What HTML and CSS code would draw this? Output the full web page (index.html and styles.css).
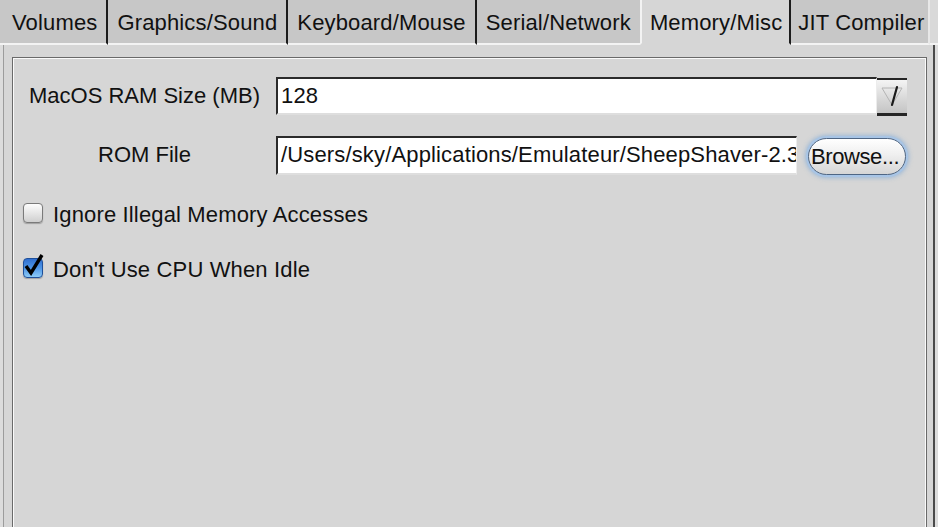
FILE: index.html
```html
<!DOCTYPE html>
<html>
<head>
<meta charset="utf-8">
<link rel="stylesheet" href="styles.css">
</head>
<body>
<div class="tabs">
  <div class="tab first">Volumes</div>
  <div class="tab">Graphics/Sound</div>
  <div class="tab">Keyboard/Mouse</div>
  <div class="tab before-active">Serial/Network</div>
  <div class="tab active">Memory/Misc</div>
  <div class="tab last">JIT Compiler</div>
  <div class="tab-fill"></div>
</div>
<div class="panel">
  <div class="group">
    <div class="form">
      <div class="lbl">MacOS RAM Size (MB)</div>
      <div class="combo">
        <div class="field">128</div>
        <div class="drop">
          <svg width="30" height="33" viewBox="0 0 30 33">
            <path d="M5 8 L25 8 L15 25 Z" fill="none" stroke="#b4b4b4" stroke-width="1"/>
            <path d="M20 7 L15 25" stroke="#1a1a1a" stroke-width="2.2" stroke-linecap="round"/>
          </svg>
        </div>
      </div>
      <div class="lbl">ROM File</div>
      <div class="filerow">
        <div class="field path">/Users/sky/Applications/Emulateur/SheepShaver-2.3</div>
        <button class="browse">Browse...</button>
      </div>
    </div>
    <div class="checks">
      <div class="check"><span class="box"></span><span class="ctext">Ignore Illegal Memory Accesses</span></div>
      <div class="check"><span class="box on"><svg width="24" height="26" viewBox="0 0 24 26"><path d="M4 14 L9 21 L20 3" fill="none" stroke="#000" stroke-width="3.4" stroke-linejoin="miter" stroke-linecap="butt"/></svg></span><span class="ctext">Don't Use CPU When Idle</span></div>
    </div>
  </div>
</div>
</body>
</html>
```

FILE: styles.css
```css
html, body {
  margin: 0;
  padding: 0;
}
body {
  width: 938px;
  height: 527px;
  overflow: hidden;
  background: #dcdcdc;
  font-family: "Liberation Sans", Arial, sans-serif;
  font-size: 22px;
  letter-spacing: 0.15px;
  color: #111;
}

.tabs {
  display: flex;
  height: 45px;
}
.tab {
  box-sizing: border-box;
  height: 45px;
  padding: 2px 9px 0 9px;
  display: flex;
  align-items: center;
  background: #c7c7c7;
  border-right: 2px solid #1c1c1c;
  border-bottom: 2px solid #f3f3f3;
  white-space: nowrap;
}
.tab.first {
  padding-left: 12px;
  padding-right: 9px;
}
.tab.before-active {
  border-right: none;
  padding-right: 9px;
}
.tab.active {
  background: #d6d6d6;
  border-left: 2px solid #f3f3f3;
  border-bottom-color: #d6d6d6;
  padding-left: 8px;
  padding-right: 7px;
}
.tab.last {
  padding-left: 7px;
  padding-right: 4px;
  border-right: 2px solid #e8e8e8;
}
.tab-fill {
  flex: 1;
  background: #d9d9d9;
  border-bottom: 2px solid #f3f3f3;
}

.panel {
  box-sizing: border-box;
  height: 482px;
  margin: 0 3px 0 3px;
  background: #d6d6d6;
  border-left: 1px solid #9c9c9c;
  border-right: 2px solid #4a4a4a;
  padding: 12px 6px 0 8px;
}

.group {
  box-sizing: border-box;
  height: 480px;
  border: 1px solid #6a6a6a;
  border-bottom: none;
  box-shadow: inset 1px 1px 0 #fafafa, inset -1px 0 0 #fafafa;
  padding: 19px 19px 0 9px;
}

.form {
  display: grid;
  grid-template-columns: 245px 1fr;
  column-gap: 9px;
  row-gap: 20px;
  align-items: center;
}
.lbl {
  text-align: center;
  white-space: nowrap;
  letter-spacing: 0;
}

.combo {
  display: flex;
  align-items: flex-start;
  height: 38px;
}
.field {
  box-sizing: border-box;
  background: #fff;
  border-top: 2px solid #2b2b2b;
  border-left: 2px solid #2b2b2b;
  border-bottom: 2px solid #dedede;
  border-right: 1px solid #ececec;
  padding: 0 4px 0 3px;
  display: flex;
  align-items: center;
  white-space: nowrap;
  overflow: hidden;
}
.combo .field {
  flex: 1;
  height: 38px;
}
.drop {
  box-sizing: border-box;
  width: 30px;
  height: 38px;
  margin-top: 1px;
  border-top: 2px solid #262626;
  border-bottom: 3px solid #262626;
  background: linear-gradient(#f4f4f4, #d9d9d9 55%, #c4c4c4);
}
.drop svg {
  display: block;
}

.filerow {
  display: flex;
  align-items: center;
  gap: 11px;
}
.field.path {
  width: 521px;
  height: 39px;
}
.browse {
  box-sizing: border-box;
  width: 98px;
  height: 37px;
  margin-top: 3px;
  padding: 0 0 0 2px;
  border: 1px solid #4f6684;
  border-radius: 19px;
  background: linear-gradient(#ffffff, #efefef 45%, #d6d6d6);
  box-shadow: 0 0 0 2px #a8c5e6, 0 0 4px 3px rgba(110, 160, 215, 0.55);
  font-family: "Liberation Sans", Arial, sans-serif;
  font-size: 22px;
  letter-spacing: -0.4px;
  color: #111;
  white-space: nowrap;
  text-align: left;
  overflow: hidden;
}

.checks {
  margin-top: 28px;
  padding-left: 1px;
  display: flex;
  flex-direction: column;
  gap: 35px;
}
.check {
  display: flex;
  align-items: center;
  gap: 10px;
  height: 20px;
  white-space: nowrap;
}
.ctext {
  padding-top: 3px;
}
.box {
  position: relative;
  box-sizing: border-box;
  width: 20px;
  height: 20px;
  border-radius: 4px;
  border: 1px solid #7a7a7a;
  background: linear-gradient(#fdfdfd, #e6e6e6 50%, #cfcfcf);
  box-shadow: 0 1px 1px rgba(0, 0, 0, 0.25);
}
.box.on {
  border-color: #1e4f9a;
  background: linear-gradient(#2f6fd0, #4e95e6 50%, #8ccaf6);
}
.box.on svg {
  position: absolute;
  left: -2px;
  top: -7px;
}
```
